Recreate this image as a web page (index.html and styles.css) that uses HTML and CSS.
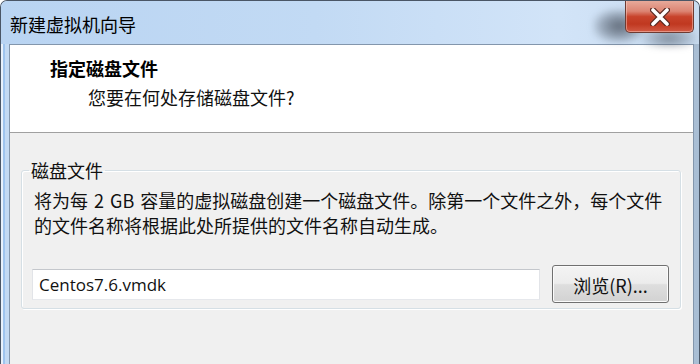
FILE: index.html
```html
<!DOCTYPE html>
<html lang="zh-CN">
<head>
<meta charset="utf-8">
<title>新建虚拟机向导</title>
<link rel="stylesheet" href="styles.css">
</head>
<body>
<div class="window">
  <div class="titlebar">
    <div class="glass-blur"></div>
    <div class="glass-blur glass-blur-2"></div>
    <span class="title">新建虚拟机向导</span>
    <div class="close-btn">
      <svg width="20" height="18" viewBox="0 0 20 18">
        <path d="M3 2 L17 16 M17 2 L3 16" stroke="#5a2a22" stroke-width="6" stroke-linecap="round"/>
        <path d="M3 2 L17 16 M17 2 L3 16" stroke="#ffffff" stroke-width="3.6" stroke-linecap="round"/>
      </svg>
    </div>
  </div>
  <div class="client">
    <div class="header">
      <div class="header-title">指定磁盘文件</div>
      <div class="header-sub">您要在何处存储磁盘文件?</div>
    </div>
    <div class="body">
      <fieldset class="group">
        <legend class="group-label">磁盘文件</legend>
        <p class="desc">将为每 2 GB 容量的虚拟磁盘创建一个磁盘文件。除第一个文件之外，每个文件<br>的文件名称将根据此处所提供的文件名称自动生成。</p>
        <div class="file-row">
          <div class="textbox">Centos7.6.vmdk</div>
          <div class="button">浏览(R)...</div>
        </div>
      </fieldset>
    </div>
  </div>
</div>
</body>
</html>
```
FILE: styles.css
```css
* { box-sizing: border-box; }
html, body { margin: 0; padding: 0; background: #ffffff; }
body {
  width: 700px;
  height: 364px;
  overflow: hidden;
  font-family: "Noto Sans CJK SC", "Noto Sans", sans-serif;
  color: #111;
}
.window {
  width: 700px;
  height: 364px;
  display: flex;
  flex-direction: column;
  border: 1px solid #4a5666;
  border-bottom: none;
  border-radius: 7px 7px 0 0;
  background: linear-gradient(to right, #c3daf3 0%, #c8ddf5 60%, #a9bed4 100%);
  box-shadow: inset 2px 0 0 #e8f1fb, inset 4px 0 0 #9ec4ee;
  overflow: hidden;
}
.titlebar {
  position: relative;
  height: 43px;
  flex: none;
  display: flex;
  align-items: flex-start;
  padding-left: 9px;
  background: linear-gradient(to right, #b9d4f2 0%, #c2daf4 45%, #d2e4f8 80%, #c9dcf0 100%);
}
.glass-blur {
  position: absolute;
  left: 592px;
  top: 8px;
  width: 52px;
  height: 34px;
  border-radius: 30%;
  background: radial-gradient(ellipse at 50% 50%, rgba(60,68,80,0.75) 0%, rgba(80,90,105,0.45) 45%, rgba(150,170,190,0) 80%);
  filter: blur(3px);
}
.glass-blur-2 {
  left: 640px;
  top: 24px;
  width: 56px;
  height: 22px;
  background: radial-gradient(ellipse at 50% 60%, rgba(70,80,92,0.55) 0%, rgba(90,100,115,0.3) 45%, rgba(150,170,190,0) 80%);
}
.title {
  position: relative;
  margin-top: 11px;
  font-size: 18px;
  line-height: 24px;
  color: #000;
}
.close-btn {
  position: relative;
  margin-left: auto;
  margin-right: 5px;
  margin-top: -1px;
  width: 69px;
  height: 33px;
  border: 1px solid #6e3b32;
  border-top: none;
  border-radius: 0 0 5px 5px;
  background: linear-gradient(to bottom, #e8ad9e 0%, #dc8573 35%, #c8432b 52%, #c03820 75%, #d25a44 100%);
  box-shadow: inset 0 0 0 1px rgba(255,220,210,0.45);
  display: flex;
  align-items: center;
  justify-content: center;
}
.close-btn svg { display: block; margin-top: 1px; }
.client {
  flex: 1;
  margin: 0 5px 0 8px;
  border: 1px solid #8396ac;
  border-bottom: none;
  background: #f0f0f0;
  display: flex;
  flex-direction: column;
}
.header {
  height: 88px;
  flex: none;
  background: #ffffff;
  border-bottom: 1px solid #a0a0a0;
  padding: 11px 0 0 40px;
}
.header-title {
  font-size: 18px;
  line-height: 24px;
  font-weight: bold;
  color: #000;
}
.header-sub {
  margin-top: 5px;
  padding-left: 38px;
  font-size: 18px;
  line-height: 24px;
  color: #111;
}
.body {
  padding: 25px 12px 0 11px;
}
.group {
  margin: 0;
  border: 1px solid #d5dfe5;
  border-radius: 3px;
  box-shadow: inset 1px 1px 0 #ffffff, 1px 1px 0 #ffffff;
  padding: 0 11px 5px 10px;
  min-width: 0;
}
.group-label {
  margin-left: -3px;
  padding: 0 2px;
  font-size: 18px;
  line-height: 24px;
  color: #111;
}
.desc {
  margin: 6px 0 0 2px;
  font-size: 18px;
  line-height: 25px;
  word-spacing: 2px;
  white-space: nowrap;
  color: #111;
}
.file-row {
  margin-top: 27px;
  display: flex;
  align-items: center;
}
.textbox {
  flex: 1;
  height: 31px;
  background: #ffffff;
  border: 1px solid;
  border-color: #c4c7cc #e2e4e8 #e6e8ec #e2e4e8;
  padding: 0 6px;
  font-family: "Open Sans", "Noto Sans", sans-serif;
  font-size: 17px;
  line-height: 29px;
  color: #111;
}
.button {
  flex: none;
  margin-left: 12px;
  width: 117px;
  height: 38px;
  border: 1px solid #707070;
  border-radius: 3px;
  background: linear-gradient(to bottom, #f4f4f4 0%, #ececec 48%, #dedede 52%, #d2d2d2 100%);
  box-shadow: inset 0 0 0 1px #fbfbfb;
  display: flex;
  align-items: center;
  justify-content: center;
  font-size: 18px;
  line-height: 24px;
  color: #111;
  padding-top: 1px;
}
```
